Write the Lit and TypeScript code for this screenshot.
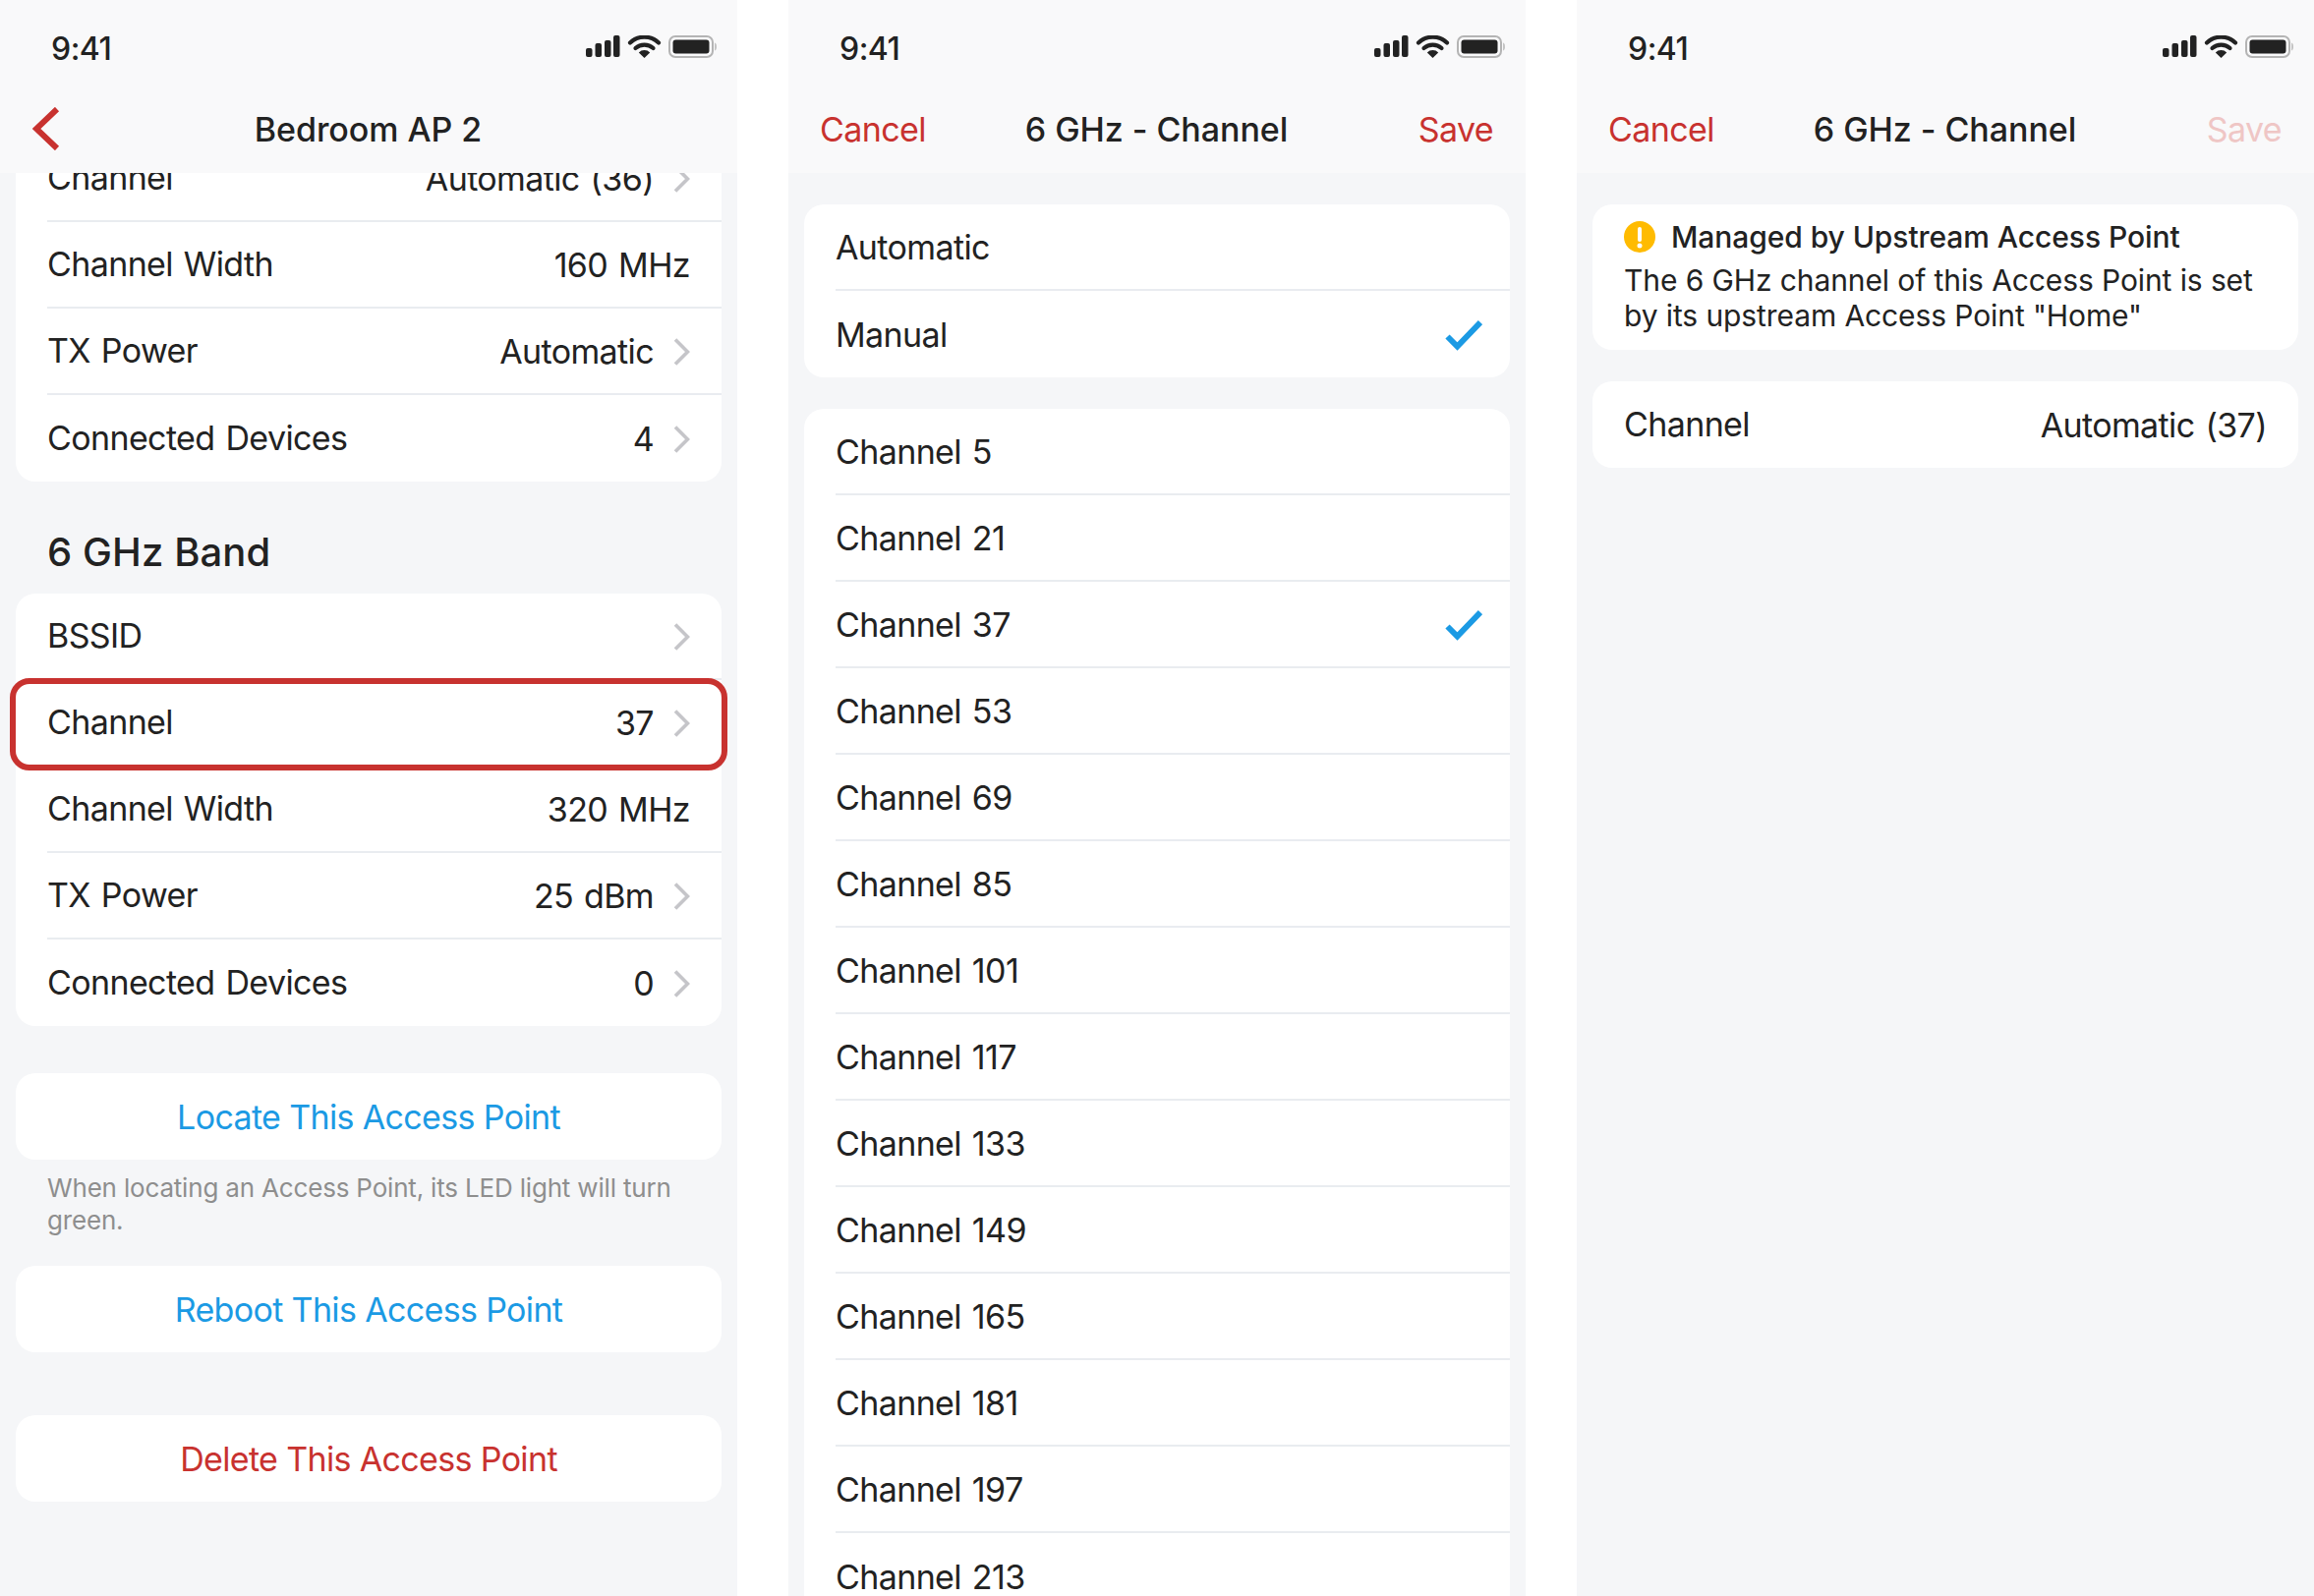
import { LitElement, html, css, nothing } from "lit";
import { customElement } from "lit/decorators.js";

const status = () => html`<div class="status">
  <span class="time">9:41</span>
  <svg class="sicons" width="134" height="24" viewBox="0 0 134 24">
    <rect x="0" y="13" width="6.500" height="9" rx="2" fill="#222"/>
    <rect x="9.500" y="8" width="6.500" height="14" rx="2" fill="#222"/>
    <rect x="19" y="5" width="6.500" height="17" rx="2" fill="#222"/>
    <rect x="28" y="0" width="6.500" height="22" rx="2" fill="#222"/>
    <path d="M46 8.500a21 21 0 0 1 29 0" fill="none" stroke="#222" stroke-width="4.200" stroke-linecap="round" transform="translate(-1,-1)"/>
    <path d="M50.500 13a13.500 13.500 0 0 1 18 0" fill="none" stroke="#222" stroke-width="4.200" stroke-linecap="round"/>
    <path d="M53.800 17.400a8 8 0 0 1 11.400 0L59.500 23z" fill="#222"/>
    <rect x="85" y="1" width="44" height="21" rx="6" fill="none" stroke="#b4b4b4" stroke-width="2"/>
    <rect x="88.500" y="4.500" width="37" height="14" rx="3" fill="#222"/>
    <path d="M131 7.500c1.600.5 2 2 2 4s-.4 3.500-2 4z" fill="#c4c4c4"/>
  </svg>
</div>`;

const chevron = html`<svg class="chev" width="17" height="28" viewBox="0 0 17 28"><path d="M2 1.500 14.500 14 2 26.500" fill="none" stroke="#c5c5c9" stroke-width="3.600"/></svg>`;
const check = html`<svg class="check" width="38" height="34" viewBox="0 0 38 34"><path d="M2.500 18.500 12.500 28.500 36 4" fill="none" stroke="#1b9ae4" stroke-width="6"/></svg>`;

const row = (label: string, value: string, chev: boolean) => html`<div class="row">
  <span class="label">${label}</span>
  <span class="right"><span>${value}</span>${chev ? chevron : nothing}</span>
</div>`;

const choice = (label: string, on = false) => html`<div class="row choice"><span>${label}</span>${on ? check : nothing}</div>`;

const channels = [5, 21, 37, 53, 69, 85, 101, 117, 133, 149, 165, 181, 197, 213];

@customElement("app-root")
export class AppRoot extends LitElement {
  static styles = css`
    :host { display: block; width: 2354px; height: 1624px; background: #fff; overflow: hidden;
      font-family: Inter, "Liberation Sans", sans-serif; color: #222; }
    .page { display: grid; grid-template-columns: repeat(3, 750px); gap: 52px; height: 1624px; }
    .phone { height: 1624px; background: #f5f6f8; display: flex; flex-direction: column; overflow: hidden; }
    .head { height: 176px; flex: none; background: #f9f9fa; position: relative; z-index: 1; }
    .status { height: 88px; box-sizing: border-box; padding: 10px 20px 0 52px; display: flex; align-items: center; justify-content: space-between; }
    .time { font-size: 32px; font-weight: 500; letter-spacing: -0.5px; }
    .sicons { display: block; margin-top: -3px; }
    .nav { height: 86px; padding: 0 33px 2px 32px; display: grid; grid-template-columns: 1fr auto 1fr; align-items: center; font-size: 34px; letter-spacing: -0.6px; }
    .nav h1 { margin: 0; font-size: 34px; font-weight: 500; letter-spacing: -0.05px; }
    .red { color: #c8322f; }
    .save { justify-self: end; }
    .off { color: #efc6c5; }
    .back { display: block; margin-left: 1px; }
    .body { flex: 1; min-height: 0; overflow: hidden; }
    .shift { margin-top: -38px; position: relative; }
    .pad { padding-top: 32px; }
    .card { margin: 0 16px; background: #fff; border-radius: 20px; overflow: hidden; }
    .row { height: 88px; box-sizing: border-box; margin-left: 32px; padding-right: 32px; display: flex; align-items: center; justify-content: space-between;
      border-bottom: 2px solid #e9ecf0; font-size: 34px; letter-spacing: -0.62px; word-spacing: 2px; }
    .row:last-child { border-bottom: 0; }
    .label { margin-top: -2px; }
    .right { display: flex; align-items: center; }
    .chev { margin-left: 20px; margin-top: 2px; }
    .check { margin-right: -4px; margin-top: 2px; }
    .section { margin: 0; padding: 49px 0 19px 48px; font-size: 40px; line-height: 46px; font-weight: 500; letter-spacing: 0.1px; }
    .action { height: 88px; display: flex; align-items: center; justify-content: center; font-size: 34px; letter-spacing: -0.65px; }
    .blue { color: #1b9ae4; }
    .gap48 { margin-top: 48px; }
    .gap64 { margin-top: 64px; }
    .foot { margin: 0; padding: 12px 32px 30px 48px; font-size: 26px; line-height: 33px; color: #8e8e8e; letter-spacing: -0.18px; }
    .sel { position: absolute; left: 10px; top: 552px; width: 730px; height: 94px; box-sizing: border-box; border: 6px solid #c8322f; border-radius: 20px; }
    .notice { padding: 15px 30px 17px 32px; font-size: 30px; line-height: 36px; letter-spacing: -0.1px; }
    .ntitle { display: flex; align-items: center; gap: 16px; font-weight: 500; margin-bottom: 8px; letter-spacing: -0.07px; }
    .ntitle svg { flex: none; }
    .second { margin-top: 32px; }
  `;

  private head(title: string, mode: "back" | "save" | "off") {
    return html`<div class="head">
      ${status()}
      <div class="nav">
        ${mode === "back"
          ? html`<svg class="back" width="28" height="44" viewBox="0 0 28 44"><path d="M25 2 4 22l21 20" fill="none" stroke="#c8322f" stroke-width="6"/></svg>`
          : html`<span class="red">Cancel</span>`}
        <h1>${title}</h1>
        ${mode === "back" ? html`<span></span>` : html`<span class="save ${mode === "off" ? "off" : "red"}">Save</span>`}
      </div>
    </div>`;
  }

  render() {
    return html`<div class="page">
      <section class="phone">
        ${this.head("Bedroom AP 2", "back")}
        <div class="body"><div class="shift">
          <div class="card">
            ${row("Channel", "Automatic (36)", true)}
            ${row("Channel Width", "160 MHz", false)}
            ${row("TX Power", "Automatic", true)}
            ${row("Connected Devices", "4", true)}
          </div>
          <h2 class="section">6 GHz Band</h2>
          <div class="card">
            ${row("BSSID", "", true)}
            ${row("Channel", "37", true)}
            ${row("Channel Width", "320 MHz", false)}
            ${row("TX Power", "25 dBm", true)}
            ${row("Connected Devices", "0", true)}
          </div>
          <div class="sel"></div>
          <div class="card action blue gap48">Locate This Access Point</div>
          <p class="foot">When locating an Access Point, its LED light will turn green.</p>
          <div class="card action blue">Reboot This Access Point</div>
          <div class="card action red gap64">Delete This Access Point</div>
        </div></div>
      </section>

      <section class="phone">
        ${this.head("6 GHz - Channel", "save")}
        <div class="body pad">
          <div class="card">${choice("Automatic")}${choice("Manual", true)}</div>
          <div class="card second">${channels.map((c) => choice(`Channel ${c}`, c === 37))}</div>
        </div>
      </section>

      <section class="phone">
        ${this.head("6 GHz - Channel", "off")}
        <div class="body pad">
          <div class="card notice">
            <div class="ntitle">
              <svg width="32" height="32" viewBox="0 0 32 32"><circle cx="16" cy="16" r="16" fill="#ffbb00"/><rect x="14" y="6" width="4" height="15" rx="2" fill="#fff"/><circle cx="16" cy="25" r="2.500" fill="#fff"/></svg>
              <span>Managed by Upstream Access Point</span>
            </div>
            <div>The 6 GHz channel of this Access Point is set by its upstream Access Point "Home"</div>
          </div>
          <div class="card second">${row("Channel", "Automatic (37)", false)}</div>
        </div>
      </section>
    </div>`;
  }
}
